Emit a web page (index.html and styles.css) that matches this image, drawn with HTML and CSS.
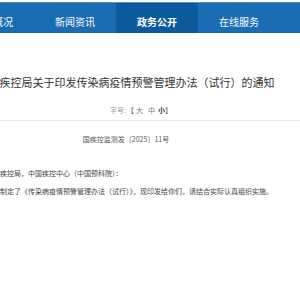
FILE: index.html
```html
<!DOCTYPE html>
<html lang="zh-CN">
<head>
<meta charset="utf-8">
<title>通知</title>
<link rel="stylesheet" href="styles.css">
</head>
<body>
<nav class="nav">
  <a class="tab">机构概况</a>
  <a class="tab">新闻资讯</a>
  <a class="tab active">政务公开</a>
  <a class="tab">在线服务</a>
  <a class="tab">互动交流</a>
</nav>
<main class="main">
  <h1 class="title">国家疾控局关于印发传染病疫情预警管理办法（试行）的通知</h1>
  <div class="tools">
    <span class="label">字号:</span>
    <span class="br-l">【</span>
    <span class="size s-big">大</span>
    <span class="size s-mid">中</span>
    <span class="size s-small">小</span>
    <span class="br-r">】</span>
  </div>
  <p class="docno">国疾控监测发〔2025〕11号</p>
  <div class="body">
    <p class="greet">各省、自治区、直辖市和新疆生产建设兵团疾控局，中国疾控中心（中国预科院）：</p>
    <p class="para">为做好传染病疫情预警工作，我局组织制定了《传染病疫情预警管理办法（试行）》，现印发给你们，请结合实际认真组织实施。</p>
  </div>
</main>
</body>
</html>
```
FILE: styles.css
```css
html, body {
  margin: 0;
  padding: 0;
  background: #fff;
  overflow: hidden;
}
body {
  font-family: "Noto Sans CJK SC", "Noto Sans", sans-serif;
  color: #333;
}
.nav {
  display: flex;
  margin-top: 2px;
  margin-left: -48px;
  height: 31px;
  background: #1a6db3;
  border-top: 1px solid #4f8fca;
  box-sizing: border-box;
}
.tab {
  flex: 0 0 82px;
  height: 30px;
  box-sizing: border-box;
  padding-top: 13px;
  line-height: 12px;
  font-size: 10px;
  color: #fff;
  text-align: center;
  white-space: nowrap;
}
.tab.active {
  background: #0c5a9b;
  font-weight: bold;
}
.main {
  width: 530px;
  margin-left: -139px;
}
.title {
  margin: 41px 0 0;
  font-size: 11px;
  line-height: 16px;
  font-weight: normal;
  text-align: center;
  color: #333;
  white-space: nowrap;
}
.tools {
  display: flex;
  margin-top: 15px;
  padding-left: 249px;
  padding-bottom: 5px;
  border-bottom: 1px solid #e8e8e8;
  font-size: 7px;
  line-height: 10px;
  color: #999;
}
.label { width: 16px; }
.br-l { margin-left: 1px; color: #666; }
.size { color: #777; }
.s-big { margin-left: 2px; }
.s-mid { margin-left: 5px; }
.s-small { margin-left: 3px; color: #333; font-weight: bold; }
.br-r { color: #666; }
.docno {
  margin: 13px 0 0;
  font-size: 7px;
  line-height: 10px;
  text-align: center;
  color: #555;
}
.body {
  margin-top: 20px;
  padding-left: 6px;
}
.greet, .para {
  margin: 0;
  font-size: 7px;
  line-height: 18px;
  color: #444;
  white-space: nowrap;
}
.para { text-indent: 14px; }
```
